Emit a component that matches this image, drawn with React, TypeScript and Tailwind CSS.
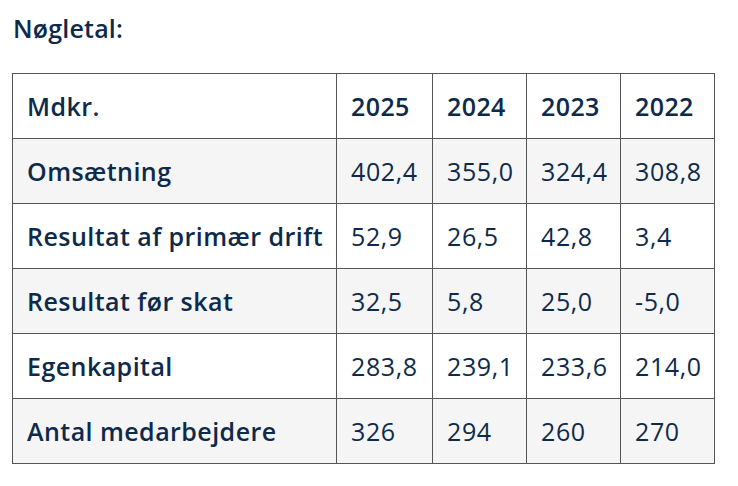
import React from "react";

const rows = [
  { label: "Omsætning", values: ["402,4", "355,0", "324,4", "308,8"] },
  { label: "Resultat af primær drift", values: ["52,9", "26,5", "42,8", "3,4"] },
  { label: "Resultat før skat", values: ["32,5", "5,8", "25,0", "-5,0"] },
  { label: "Egenkapital", values: ["283,8", "239,1", "233,6", "214,0"] },
  { label: "Antal medarbejdere", values: ["326", "294", "260", "270"] },
];

const years = ["2025", "2024", "2023", "2022"];

export default function App() {
  return (
    <div
      className="w-[738px] h-[486px] bg-white text-[#0e2a4b] px-3 pt-[13px]"
      style={{ fontFamily: "'Open Sans', 'Noto Sans', sans-serif" }}
    >
      <h2 className="text-[25px] font-semibold leading-[30px] tracking-[0.2px] pl-px">Nøgletal:</h2>

      <table className="mt-[30px] w-[703px] table-fixed border-collapse text-[25px] leading-none">
        <colgroup>
          <col className="w-[324px]" />
          <col className="w-[96px]" />
          <col className="w-[94px]" />
          <col className="w-[94px]" />
          <col className="w-[94px]" />
        </colgroup>
        <thead>
          <tr className="h-[65px] bg-white">
            <th className="border border-[#555] pl-[14px] text-left font-semibold tracking-[0.45px]">Mdkr.</th>
            {years.map((y) => (
              <th key={y} className="border border-[#555] pl-[14px] text-left font-semibold tracking-[0.4px]">
                {y}
              </th>
            ))}
          </tr>
        </thead>
        <tbody>
          {rows.map((r, i) => (
            <tr key={r.label} className={`h-[65px] ${i % 2 === 0 ? "bg-[#f5f5f5]" : "bg-white"}`}>
              <td className="border border-[#555] pl-[14px] font-semibold tracking-[0.45px] whitespace-nowrap">
                {r.label}
              </td>
              {r.values.map((v, j) => (
                <td key={j} className="border border-[#555] pl-[14px] tracking-[0.6px] whitespace-nowrap">
                  {v}
                </td>
              ))}
            </tr>
          ))}
        </tbody>
      </table>
    </div>
  );
}
